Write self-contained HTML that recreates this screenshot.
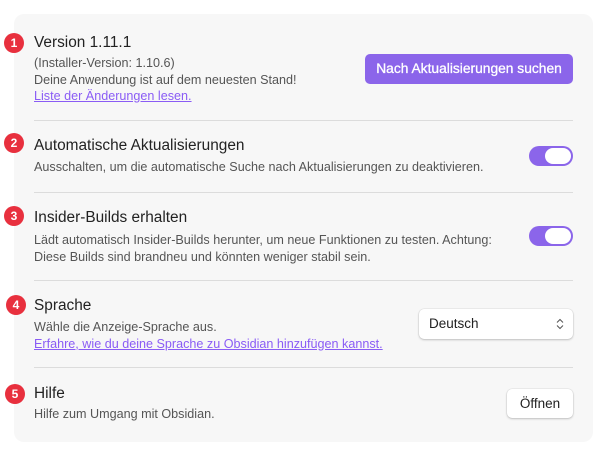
<!DOCTYPE html>
<html><head><meta charset="utf-8"><style>
body{margin:0;width:608px;height:464px;background:#fff;font-family:"Liberation Sans",sans-serif;position:relative;overflow:hidden}
.panel{position:absolute;left:14px;top:14px;width:579px;height:428px;background:#f7f7f7;border-radius:10px}
.a{position:absolute;white-space:nowrap}
.t{font-size:15.4px;color:#222;line-height:20px}
.d{font-size:12.6px;color:#555;line-height:16.5px}
.l{color:#8a5cf5;text-decoration:underline}
.sep{position:absolute;left:34px;width:539px;height:1px;background:#dcdcdc}
.b{position:absolute;width:20px;height:20px;border-radius:50%;background:#e8303e;color:#fff;font-size:12px;font-weight:bold;text-align:center;line-height:20px}
.tog{position:absolute;left:529px;width:44px;height:20px;border-radius:10px;background:#8b65ea}
.tog:after{content:"";position:absolute;right:2px;top:2px;width:26px;height:16px;border-radius:8px;background:#fff}
.btn{position:absolute;background:#fff;border-radius:5px;box-shadow:0 1px 2px rgba(0,0,0,.2),0 0 0 .5px rgba(0,0,0,.08);font-size:13.5px;color:#222}
</style></head><body>
<div class="panel"></div>
<div class="b" style="left:4px;top:33px">1</div>
<div class="b" style="left:4px;top:133px">2</div>
<div class="b" style="left:4px;top:206px">3</div>
<div class="b" style="left:6px;top:295px">4</div>
<div class="b" style="left:5px;top:384px">5</div>

<div class="a t" style="left:34px;top:33px">Version 1.11.1</div>
<div class="a d" style="left:34px;top:55px">(Installer-Version: 1.10.6)<br>Deine Anwendung ist auf dem neuesten Stand!<br><span class="l">Liste der Änderungen lesen.</span></div>
<div class="a" style="left:365px;top:54px;width:208px;height:30px;background:#8b65ea;border-radius:5px;color:#fff;font-size:13.8px;text-align:center;line-height:30px;-webkit-text-stroke:0.3px #fff">Nach Aktualisierungen suchen</div>
<div class="sep" style="top:120px"></div>

<div class="a t" style="left:34px;top:136px">Automatische Aktualisierungen</div>
<div class="a d" style="left:34px;top:159px">Ausschalten, um die automatische Suche nach Aktualisierungen zu deaktivieren.</div>
<div class="tog" style="top:146px"></div>
<div class="sep" style="top:192px"></div>

<div class="a t" style="left:34px;top:208px">Insider-Builds erhalten</div>
<div class="a d" style="left:34px;top:232px">Lädt automatisch Insider-Builds herunter, um neue Funktionen zu testen. Achtung:<br>Diese Builds sind brandneu und könnten weniger stabil sein.</div>
<div class="tog" style="top:226px"></div>
<div class="sep" style="top:280px"></div>

<div class="a t" style="left:34px;top:296px">Sprache</div>
<div class="a d" style="left:34px;top:319px">Wähle die Anzeige-Sprache aus.<br><span class="l">Erfahre, wie du deine Sprache zu Obsidian hinzufügen kannst.</span></div>
<div class="btn" style="left:419px;top:309px;width:154px;height:30px;line-height:30px"><span style="position:absolute;left:10px">Deutsch</span><svg style="position:absolute;right:9px;top:9px" width="8" height="12" viewBox="0 0 8 12"><path d="M1 4.5L4 1.5L7 4.5M1 7.5L4 10.5L7 7.5" fill="none" stroke="#555" stroke-width="1"/></svg></div>
<div class="sep" style="top:367px"></div>

<div class="a t" style="left:34px;top:384px">Hilfe</div>
<div class="a d" style="left:34px;top:406px">Hilfe zum Umgang mit Obsidian.</div>
<div class="btn" style="left:507px;top:389px;width:66px;height:29px;line-height:29px;text-align:center">Öffnen</div>
</body></html>
